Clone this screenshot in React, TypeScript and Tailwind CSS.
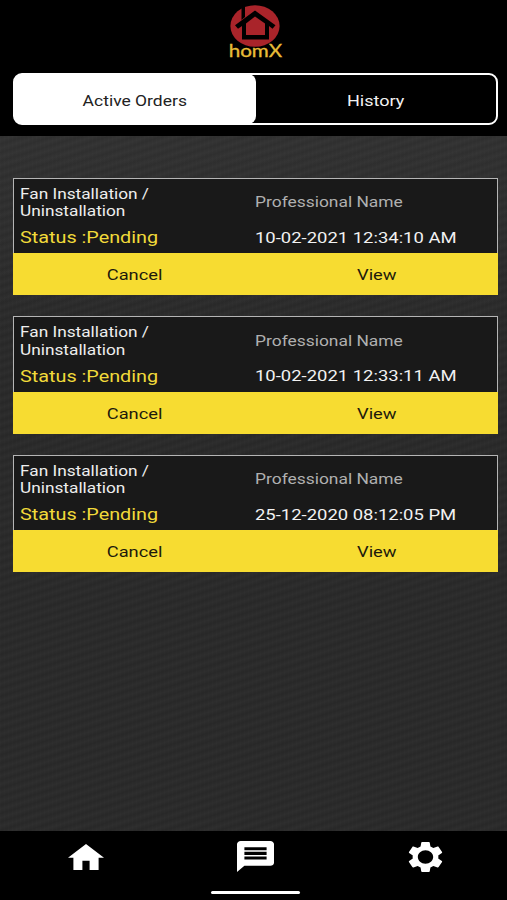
import type { ReactNode } from "react";

const orders = [
  { id: 1, date: "10-02-2021 12:34:10 AM" },
  { id: 2, date: "10-02-2021 12:33:11 AM" },
  { id: 3, date: "25-12-2020 08:12:05 PM" },
];

const Logo = () => (
  <div className="flex flex-col items-center">
    <svg className="h-[42px] w-[50px]" viewBox="230 5 50 42" preserveAspectRatio="none">
      <ellipse cx="255" cy="26" rx="24.6" ry="20.8" fill="#a9242a" />
      <path d="M241.5 5 H245 V17 L241.5 20 Z" fill="#000" />
      <path d="M235 25.3 L255 10.5 L275.5 25.3 L272.5 28.7 L269 26 V39.5 H242 V26 L238 28.7 Z" fill="#000" />
      <path d="M246 23.5 L255 16.5 L265 23.5 V35 H246 Z" fill="#a9242a" />
    </svg>
    <span className="-mt-[6px] origin-center scale-x-[1.25] font-['Lato'] text-[16.5px] leading-[20px] text-[#e8bd38] [-webkit-text-stroke:0.3px_#e8bd38]">
      homX
    </span>
  </div>
);

const Wide = ({ className, children }: { className: string; children: ReactNode }) => (
  <span className={`block whitespace-nowrap ${className}`}>{children}</span>
);

const OrderCard = ({ date }: { date: string }) => (
  <div className="h-[117.5px] w-[485px]">
    <div className="flex h-[75.5px] border border-b-0 border-[#b5b5b5] bg-[#191919]">
      <div className="w-[236px] pt-[7.4px] pl-[5.5px]">
        <Wide className="origin-left scale-x-[1.19] text-[14.5px] leading-[17.3px] text-[#eeeeee]">
          Fan Installation /<br />Uninstallation
        </Wide>
        <Wide className="mt-[7.5px] origin-left scale-x-[1.2] text-[16.5px] leading-[20px] text-[#f1da3a]">Status :Pending</Wide>
      </div>
      <div className="pt-[13.9px] pl-[5px]">
        <Wide className="origin-left scale-x-[1.16] text-[15px] leading-[20px] text-[#b0b0b0]">Professional Name</Wide>
        <Wide className="mt-[15.5px] origin-left scale-x-[1.19] text-[15.5px] leading-[20px] text-[#f2f2f2]">{date}</Wide>
      </div>
    </div>
    <div className="grid h-[42px] grid-cols-2 items-center bg-[#f7dc31] pt-[2px] text-[15.5px] leading-[20px] text-[#1d1a0c]">
      <button className="flex justify-center">
        <Wide className="origin-center scale-x-[1.18]">Cancel</Wide>
      </button>
      <button className="flex justify-center">
        <Wide className="origin-center scale-x-[1.18]">View</Wide>
      </button>
    </div>
  </div>
);

const BottomNav = () => (
  <nav className="flex h-[69px] flex-col bg-black text-white">
    <div className="grid h-[51px] grid-cols-[172px_167px_172px] place-items-center">
      <svg className="h-[26px] w-[36px]" viewBox="2 3 20 17" preserveAspectRatio="none" fill="currentColor">
        <path d="M10 20v-6h4v6h5v-8h3L12 3 2 12h3v8z" />
      </svg>
      <svg className="h-[31px] w-[37px]" viewBox="2 2 20 20" preserveAspectRatio="none" fill="currentColor">
        <path d="M20 2H4c-1.1 0-1.99.9-1.99 2L2 22l4-4h14c1.1 0 2-.9 2-2V4c0-1.1-.9-2-2-2zm-2 12H6v-2h12v2zm0-3H6V9h12v2zm0-3H6V6h12v2z" />
      </svg>
      <svg className="h-[30px] w-[35px]" viewBox="2.2 2.4 19.6 19.2" preserveAspectRatio="none" fill="currentColor">
        <path d="M19.14 12.94c.04-.3.06-.61.06-.94 0-.32-.02-.64-.07-.94l2.03-1.58c.18-.14.23-.41.12-.61l-1.92-3.32c-.12-.22-.37-.29-.59-.22l-2.39.96c-.5-.38-1.03-.7-1.62-.94l-.36-2.54c-.04-.24-.24-.41-.48-.41h-3.84c-.24 0-.43.17-.47.41l-.36 2.54c-.59.24-1.13.57-1.62.94l-2.39-.96c-.22-.08-.47 0-.59.22L2.74 8.87c-.12.21-.08.47.12.61l2.03 1.58c-.05.3-.09.63-.09.94s.02.64.07.94l-2.03 1.58c-.18.14-.23.41-.12.61l1.92 3.32c.12.22.37.29.59.22l2.39-.96c.5.38 1.03.7 1.62.94l.36 2.54c.05.24.24.41.48.41h3.84c.24 0 .44-.17.47-.41l.36-2.54c.59-.24 1.13-.56 1.62-.94l2.39.96c.22.08.47 0 .59-.22l1.92-3.32c.12-.22.07-.47-.12-.61l-2.01-1.58zM12 16.3c-2.4 0-4.3-1.92-4.3-4.3s1.9-4.3 4.3-4.3 4.3 1.92 4.3 4.3-1.9 4.3-4.3 4.3z" />
      </svg>
    </div>
    <div className="mt-[9px] ml-[211px] h-[2.5px] w-[89px] rounded-full bg-white" />
  </nav>
);

export default function App() {
  return (
    <div className="flex h-[900px] w-[507px] flex-col overflow-hidden bg-black font-['Roboto',sans-serif]">
      <header className="h-[136px] bg-black pt-[5px]">
        <div className="flex h-[68px] justify-center pl-[3px]">
          <Logo />
        </div>
        <div className="ml-[13px] flex h-[52px] w-[485px] rounded-[9px] border-2 border-white leading-[20px]">
          <button className="-my-px -ml-px flex w-[242px] items-center justify-center rounded-[8px] bg-white pt-[3px] text-[15px] text-[#222]">
            <Wide className="origin-center scale-x-[1.165]">Active Orders</Wide>
          </button>
          <button className="flex flex-1 items-center justify-center pt-[3px] text-[15.5px] text-[#f2f2f2]">
            <Wide className="origin-center scale-x-[1.165]">History</Wide>
          </button>
        </div>
      </header>
      <main className="flex flex-1 flex-col gap-[21px] bg-[#2e2e2e] bg-[linear-gradient(180deg,rgba(255,255,255,0.035),transparent_30%),repeating-linear-gradient(163deg,rgba(0,0,0,0.14)_0px,rgba(0,0,0,0.02)_4px,rgba(0,0,0,0.14)_8px),repeating-linear-gradient(90deg,rgba(255,255,255,0.012)_0px,rgba(255,255,255,0.012)_1px,transparent_1px,transparent_4px)] pt-[41.6px] pl-[13px]">
        {orders.map((order) => (
          <OrderCard key={order.id} date={order.date} />
        ))}
      </main>
      <BottomNav />
    </div>
  );
}
